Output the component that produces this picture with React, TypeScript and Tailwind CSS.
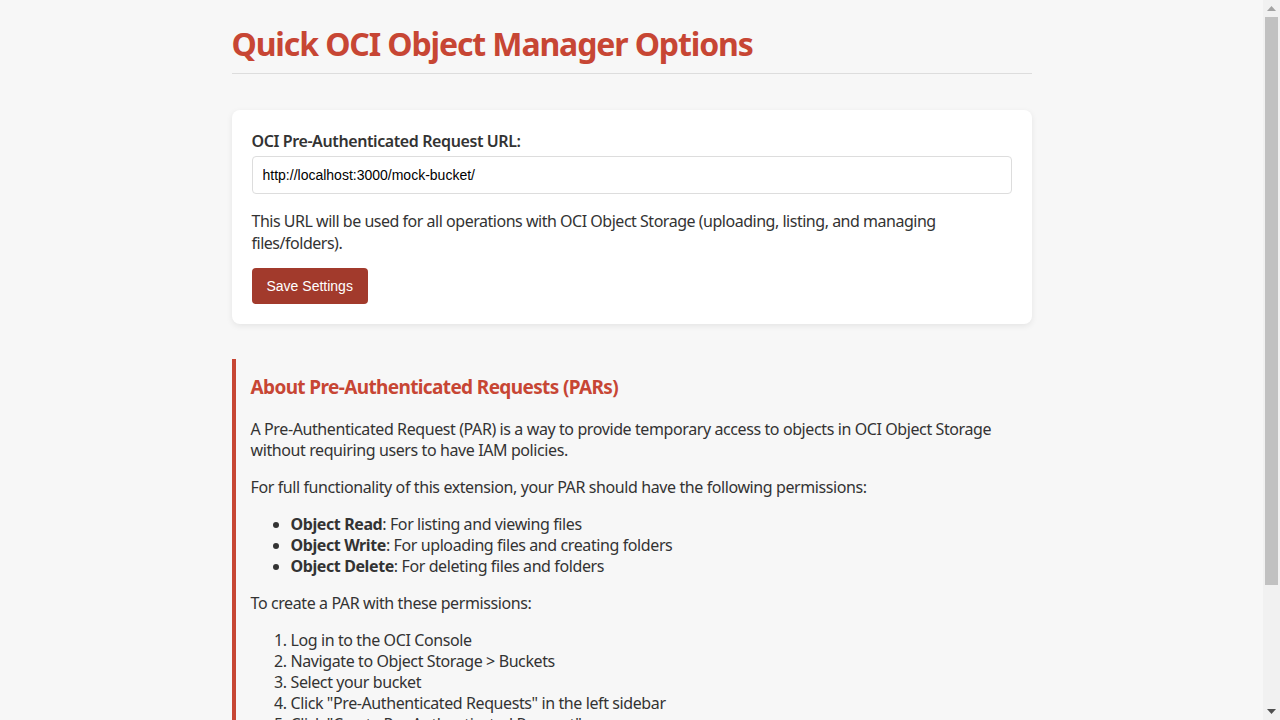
import React from "react";

function FakeScrollbar() {
  return (
    <div className="fixed top-0 right-0 flex h-screen w-[17px] flex-col items-center bg-[#f1f1f1]">
      <div className="flex h-[17px] w-full items-center justify-center">
        <svg width="9" height="5" viewBox="0 0 9 5">
          <path d="M4.5 0 L9 5 L0 5 Z" fill="#a3a3a3" />
        </svg>
      </div>
      <div className="h-[568px] w-[13px] bg-[#c1c1c1]" />
      <div className="flex-1" />
      <div className="flex h-[17px] w-full items-center justify-center">
        <svg width="9" height="5" viewBox="0 0 9 5">
          <path d="M0 0 L9 0 L4.5 5 Z" fill="#505050" />
        </svg>
      </div>
    </div>
  );
}

export default function App() {
  return (
    <div className="min-h-screen bg-[#f7f7f7] text-[#333] tracking-[-0.025em] [font-family:'Segoe_UI','Noto_Sans',sans-serif]">
      <div className="mr-[17px]">
        <div className="mx-auto max-w-[800px] pt-[22px] pb-10">
          <h1 className="border-b border-[#dddddd] pb-[8px] text-[32px] font-bold leading-[43px] tracking-[-0.035em] text-[#c74634]">
            Quick OCI Object Manager Options
          </h1>

          <div className="mt-[36px] rounded-lg bg-white px-5 pt-[21px] pb-5 shadow-[0_2px_6px_rgba(0,0,0,0.08)]">
            <label className="mb-[4px] block text-[16px] font-semibold leading-[21px]">
              OCI Pre-Authenticated Request URL:
            </label>
            <input
              type="text"
              defaultValue="http://localhost:3000/mock-bucket/"
              className="block h-[38px] w-full rounded border border-[#dddddd] bg-white px-[10px] text-[14px] tracking-normal text-black [font-family:Arial,'Liberation_Sans',sans-serif] outline-none"
            />
            <p className="mt-[16px] text-[16px] leading-[22px] tracking-[-0.03em]">
              This URL will be used for all operations with OCI Object Storage (uploading, listing, and managing
              files/folders).
            </p>
            <button className="mt-[14px] h-[36px] rounded bg-[#a23a2c] px-[15px] text-[14px] tracking-normal text-white [font-family:Arial,'Liberation_Sans',sans-serif]">
              Save Settings
            </button>
          </div>

          <div className="mt-[35px] border-l-4 border-[#c74634] pt-[16px] pr-[15px] pb-[15px] pl-[15px] text-[16px] leading-[21px]">
            <h3 className="text-[19px] font-bold leading-[25px] tracking-[-0.033em] text-[#c74634]">
              About Pre-Authenticated Requests (PARs)
            </h3>
            <p className="mt-[19px]">
              A Pre-Authenticated Request (PAR) is a way to provide temporary access to objects in OCI Object Storage
              without requiring users to have IAM policies.
            </p>
            <p className="mt-[16px]">
              For full functionality of this extension, your PAR should have the following permissions:
            </p>
            <ul className="mt-[16px] list-disc pl-[40px]">
              <li>
                <strong>Object Read</strong>: For listing and viewing files
              </li>
              <li>
                <strong>Object Write</strong>: For uploading files and creating folders
              </li>
              <li>
                <strong>Object Delete</strong>: For deleting files and folders
              </li>
            </ul>
            <p className="mt-[16px]">To create a PAR with these permissions:</p>
            <ol className="mt-[16px] list-decimal pl-[40px]">
              <li>Log in to the OCI Console</li>
              <li>Navigate to Object Storage &gt; Buckets</li>
              <li>Select your bucket</li>
              <li>Click "Pre-Authenticated Requests" in the left sidebar</li>
              <li>Click "Create Pre-Authenticated Request"</li>
              <li>Select "Bucket" as the target</li>
              <li>Select "Permit object reads and writes" as the access type</li>
              <li>Enable "Enable Object Listing"</li>
              <li>Set an appropriate expiration date</li>
              <li>Click "Create Pre-Authenticated Request"</li>
              <li>Copy the generated URL and paste it above</li>
            </ol>
          </div>
        </div>
      </div>
      <FakeScrollbar />
    </div>
  );
}
